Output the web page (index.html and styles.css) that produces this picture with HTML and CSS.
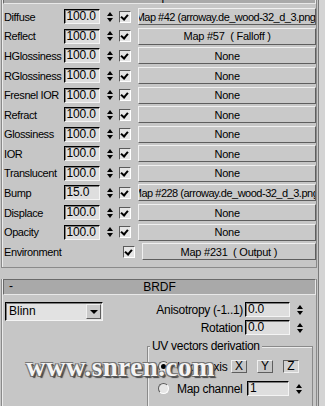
FILE: index.html
```html
<!DOCTYPE html>
<html lang="en">
<head>
  <meta charset="UTF-8" />
  <title>Maps / BRDF</title>
  <link rel="stylesheet" href="styles.css">
</head>
<body>
  <div class="main">
    <div class="rollout maps">
      <div class="roll-head"><span class="title">Maps</span></div>
      <div class="rows">
        <div class="row"><span class="lbl">Diffuse</span><span class="num">100.0</span><span class="spin"></span><span class="chk"></span><span class="map long"><span>Map #42 (arroway.de_wood-32_d_3.png)</span></span></div>
        <div class="row"><span class="lbl">Reflect</span><span class="num">100.0</span><span class="spin"></span><span class="chk"></span><span class="map"><span>Map #57&nbsp; ( Falloff )</span></span></div>
        <div class="row"><span class="lbl">HGlossiness</span><span class="num">100.0</span><span class="spin"></span><span class="chk"></span><span class="map"><span>None</span></span></div>
        <div class="row"><span class="lbl">RGlossiness</span><span class="num">100.0</span><span class="spin"></span><span class="chk"></span><span class="map"><span>None</span></span></div>
        <div class="row"><span class="lbl">Fresnel IOR</span><span class="num">100.0</span><span class="spin"></span><span class="chk"></span><span class="map"><span>None</span></span></div>
        <div class="row"><span class="lbl">Refract</span><span class="num">100.0</span><span class="spin"></span><span class="chk"></span><span class="map"><span>None</span></span></div>
        <div class="row"><span class="lbl">Glossiness</span><span class="num">100.0</span><span class="spin"></span><span class="chk"></span><span class="map"><span>None</span></span></div>
        <div class="row"><span class="lbl">IOR</span><span class="num">100.0</span><span class="spin"></span><span class="chk"></span><span class="map"><span>None</span></span></div>
        <div class="row"><span class="lbl">Translucent</span><span class="num">100.0</span><span class="spin"></span><span class="chk"></span><span class="map"><span>None</span></span></div>
        <div class="row"><span class="lbl">Bump</span><span class="num">15.0</span><span class="spin"></span><span class="chk"></span><span class="map long"><span>Map #228 (arroway.de_wood-32_d_3.png)</span></span></div>
        <div class="row"><span class="lbl">Displace</span><span class="num">100.0</span><span class="spin"></span><span class="chk"></span><span class="map"><span>None</span></span></div>
        <div class="row"><span class="lbl">Opacity</span><span class="num">100.0</span><span class="spin"></span><span class="chk"></span><span class="map"><span>None</span></span></div>
        <div class="row"><span class="lbl env">Environment</span><span class="chk"></span><span class="map"><span>Map #231&nbsp; ( Output )</span></span></div>
      </div>
    </div>

    <div class="rollout brdf">
      <div class="roll-head"><span class="minus">-</span><span class="title">BRDF</span></div>
      <div class="brdf-body">
        <div class="brdf-top">
          <div class="combo"><span>Blinn</span><span class="drop"></span></div>
          <div class="params">
            <div class="prow"><span class="plbl">Anisotropy (-1..1)</span><span class="num wide">0.0</span><span class="spin"></span></div>
            <div class="prow"><span class="plbl">Rotation</span><span class="num wide">0.0</span><span class="spin"></span></div>
          </div>
        </div>
        <div class="group">
          <span class="legend">UV vectors derivation</span>
          <div class="grow">
            <span class="radio on"></span><span class="rtext">Local axis</span>
            <span class="axes"><span class="axis">X</span><span class="axis">Y</span><span class="axis down">Z</span></span>
          </div>
          <div class="grow">
            <span class="radio"></span><span class="rtext long">Map channel</span>
            <span class="num chan">1</span><span class="spin"></span>
          </div>
        </div>
      </div>
    </div>

    <div class="watermark">www.snren.com</div>
  </div>
  <div class="scroll"></div>
</body>
</html>
```

FILE: styles.css
```css
body {
  margin: 0;
  width: 325px;
  height: 406px;
  overflow: hidden;
  display: flex;
  background: #c6c6c6;
  font-family: "Liberation Sans", Arial, sans-serif;
  font-size: 11px;
  color: #000;
}
.main {
  width: 318px;
  height: 406px;
  overflow: hidden;
  position: relative;
}
.scroll {
  flex: 1;
  border-left: 1px solid #7a7a7a;
  background: #d4d4d4;
}
.rollout {
  margin: 0 1px;
  border: 1px solid #8a8a8a;
  border-top: none;
  box-shadow: inset 1px 0 #ececec;
}
.roll-head {
  height: 14px;
  margin: 0 0 0 1px;
  background: #a9a9a9;
  border: 1px solid;
  border-color: #6a6a6a #e8e8e8 #e8e8e8 #6a6a6a;
  display: flex;
  align-items: center;
  justify-content: center;
  position: relative;
  font-size: 12px;
}
.maps .roll-head {
  margin-top: -12px;
}
.minus {
  position: absolute;
  left: 5px;
  top: -1px;
}
.rows {
  padding: 3px 0 5px;
}
.row {
  height: 19.58px;
  display: flex;
  align-items: center;
}
.lbl {
  width: 60px;
  padding-left: 2px;
  white-space: nowrap;
  font-size: 11px;
  letter-spacing: -0.4px;
}
.lbl.env {
  width: 116px;
}
.num {
  width: 33px;
  height: 13px;
  line-height: 13px;
  padding-left: 2px;
  font-size: 12px;
  letter-spacing: -0.2px;
  background: #dedede;
  border: 1px solid;
  border-color: #000 #f4f4f4 #f4f4f4 #000;
  box-shadow: inset 1px 1px #7c7c7c;
  overflow: hidden;
}
.spin {
  width: 7px;
  height: 14px;
  margin-left: 6px;
  position: relative;
}
.spin::before, .spin::after {
  content: "";
  position: absolute;
  left: 1px;
  border-left: 3px solid transparent;
  border-right: 3px solid transparent;
}
.spin::before {
  top: 2px;
  border-bottom: 4px solid #000;
}
.spin::after {
  bottom: 2px;
  border-top: 4px solid #000;
}
.chk {
  width: 10px;
  height: 10px;
  margin-left: 6px;
  background: #e6e6e6;
  border: 1px solid;
  border-color: #5a5a5a #fff #fff #5a5a5a;
  position: relative;
}
.chk::after {
  content: "";
  position: absolute;
  left: 2px;
  top: 1px;
  width: 3px;
  height: 5px;
  border: solid #000;
  border-width: 0 2px 2px 0;
  transform: rotate(40deg);
}
.map {
  width: 177px;
  height: 15px;
  margin-left: 7px;
  background: #c9c9c9;
  border: 1px solid;
  border-color: #f0f0f0 #5e5e5e #5e5e5e #f0f0f0;
  display: flex;
  justify-content: center;
  align-items: center;
  overflow: hidden;
  white-space: nowrap;
  font-size: 11px;
  letter-spacing: -0.25px;
}
.map.long {
  letter-spacing: -0.5px;
}
.brdf {
  margin-top: 11px;
  height: 130px;
  border-bottom: none;
}
.brdf .roll-head {
  border-top-color: #6a6a6a;
}
.brdf-body {
  padding: 7px 0 0 3px;
}
.brdf-top {
  display: flex;
}
.combo {
  width: 133px;
  height: 17px;
  background: #e2e2e2;
  border: 1px solid;
  border-color: #000 #f4f4f4 #f4f4f4 #000;
  box-shadow: inset 1px 1px #7c7c7c;
  display: flex;
  align-items: center;
  justify-content: space-between;
  padding-left: 3px;
  font-size: 12px;
}
.drop {
  width: 15px;
  height: 15px;
  margin-right: 1px;
  background: #cacaca;
  border: 1px solid;
  border-color: #f0f0f0 #5e5e5e #5e5e5e #f0f0f0;
  box-sizing: border-box;
  position: relative;
}
.drop::after {
  content: "";
  position: absolute;
  left: 3px;
  top: 5px;
  border-left: 4px solid transparent;
  border-right: 4px solid transparent;
  border-top: 4px solid #000;
}
.params {
  margin-left: auto;
  margin-right: 13px;
}
.prow {
  display: flex;
  align-items: center;
  height: 20px;
  margin-top: -2px;
}
.plbl {
  width: 140px;
  text-align: right;
  padding-right: 2px;
  font-size: 12px;
  letter-spacing: -0.3px;
}
.num.wide {
  width: 41px;
}
.group {
  margin: 8px 3px 0 142px;
  height: 60px;
  border: 1px solid #8a8a8a;
  border-bottom: none;
  box-shadow: inset 1px 1px #ececec;
  position: relative;
  padding-top: 9px;
}
.legend {
  position: absolute;
  top: -8px;
  left: 2px;
  padding: 0 2px;
  background: #c6c6c6;
  font-size: 12px;
  letter-spacing: -0.3px;
}
.grow {
  display: flex;
  align-items: center;
  height: 22px;
  padding-left: 10px;
}
.radio {
  width: 9px;
  height: 9px;
  border-radius: 50%;
  background: #e6e6e6;
  border: 1px solid;
  border-color: #5a5a5a #fff #fff #5a5a5a;
  position: relative;
}
.radio.on::after {
  content: "";
  position: absolute;
  left: 2px;
  top: 2px;
  width: 5px;
  height: 5px;
  border-radius: 50%;
  background: #000;
}
.rtext {
  margin-left: 8px;
  width: 54px;
  font-size: 12px;
  letter-spacing: -0.3px;
  white-space: nowrap;
}
.rtext.long {
  width: 70px;
}
.axes {
  display: flex;
  gap: 10px;
}
.axis {
  width: 14px;
  height: 11px;
  line-height: 11px;
  text-align: center;
  border: 1px solid;
  border-color: #f0f0f0 #5e5e5e #5e5e5e #f0f0f0;
  font-size: 12px;
}
.axis.down {
  border-color: #5e5e5e #f0f0f0 #f0f0f0 #5e5e5e;
  background: #d2d2d2;
}
.num.chan {
  width: 38px;
  margin-left: 0;
}
.watermark {
  position: absolute;
  left: 26px;
  top: 352px;
  font-family: "Liberation Serif", "Times New Roman", serif;
  font-weight: bold;
  font-size: 27px;
  color: #f4f4f4;
  letter-spacing: 0.5px;
  text-shadow: 1px 1px 0 #555, -1px -1px 0 #777, 1px -1px 0 #777, -1px 1px 0 #777, 2px 2px 1px #444;
}
```
